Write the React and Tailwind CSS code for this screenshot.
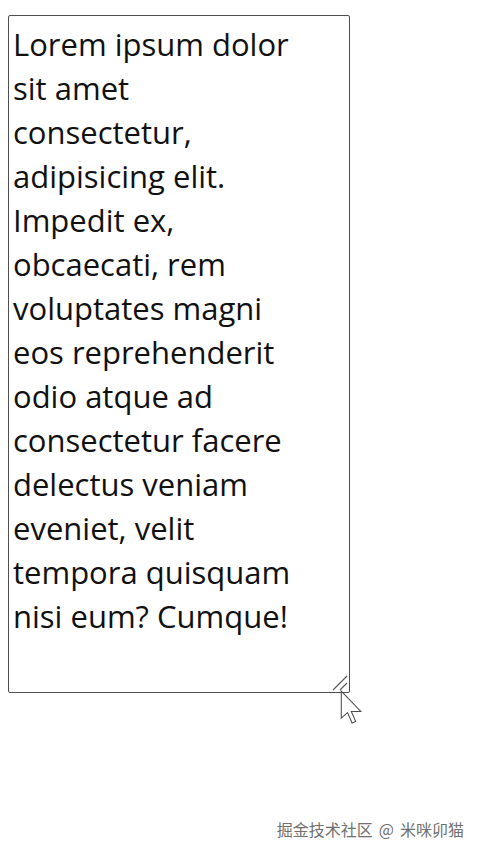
const LINES = [
  'Lorem ipsum dolor',
  'sit amet',
  'consectetur,',
  'adipisicing elit.',
  'Impedit ex,',
  'obcaecati, rem',
  'voluptates magni',
  'eos reprehenderit',
  'odio atque ad',
  'consectetur facere',
  'delectus veniam',
  'eveniet, velit',
  'tempora quisquam',
  'nisi eum? Cumque!',
]

// resize grip drawn over the textarea corner
function Grip() {
  return (
    <svg className="absolute right-[2px] bottom-[2px] w-[16px] h-[16px]" viewBox="0 0 16 16">
      <path d="M1 15 L15 1" stroke="#5e5e5e" strokeWidth="1.3" />
      <path d="M8 15 L15 8" stroke="#5e5e5e" strokeWidth="1.3" />
    </svg>
  )
}

function Cursor() {
  return (
    <svg className="absolute left-[340px] top-[690px] w-[24px] h-[37px]" viewBox="0 0 12.5 19.5">
      <path
        d="M0.6 0.6 L0.6 14.8 L3.9 11.9 L6.3 17.4 L8.2 16.6 L5.9 11.3 L10.9 11.3 Z"
        fill="white"
        stroke="#4b4b4b"
        strokeWidth="0.55"
      />
    </svg>
  )
}

export default function App() {
  return (
    <div className="relative w-[480px] h-[854px] bg-white overflow-hidden font-['Open_Sans',sans-serif]">
      <div className="relative ml-[8px] mt-[15px] w-[342px] h-[678px]">
        <textarea
          readOnly
          value={LINES.join('\n')}
          className="block w-full h-full border border-[#4f4f4f] rounded-[2px] pl-[4px] pr-[2px] pt-[6px] font-['Open_Sans',sans-serif] text-[31px] leading-[44px] text-[#111] bg-white resize-none overflow-hidden outline-none whitespace-pre-wrap"
        />
        <Grip />
      </div>

      <Cursor />

      {/* watermark */}
      <div className="absolute right-[16px] top-[817px] flex items-center gap-[6px] font-['Noto_Sans_CJK_SC',sans-serif] text-[16px] leading-[24px] text-[#707070] [text-shadow:0_0_2px_#fff,0_0_1px_#fff]">
        <span>掘金技术社区</span>
        <span>@</span>
        <span>米咪卯猫</span>
      </div>
    </div>
  )
}
